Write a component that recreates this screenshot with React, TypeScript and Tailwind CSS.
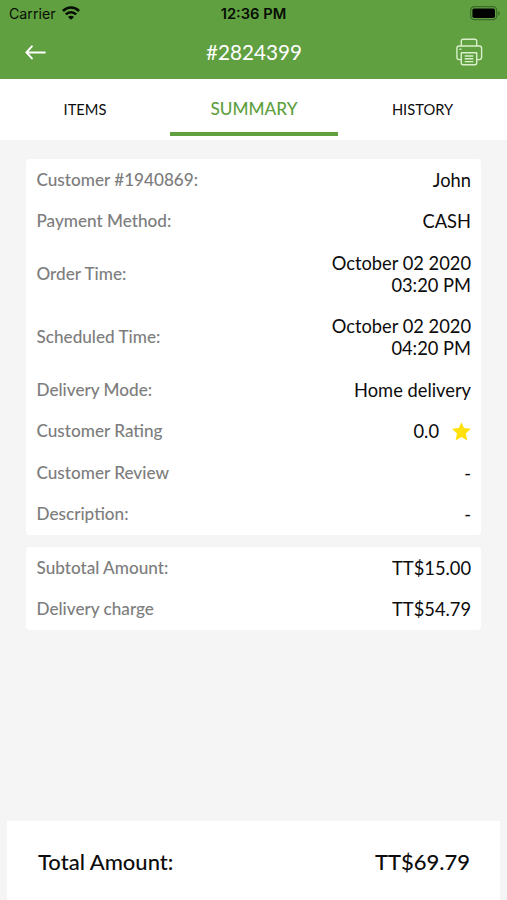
import React from 'react';

interface DetailItem {
  label: string;
  value: string;
  rating?: boolean;
}

const orderDetails: DetailItem[] = [
  { label: 'Customer #1940869:', value: 'John' },
  { label: 'Payment Method:', value: 'CASH' },
  { label: 'Order Time:', value: 'October 02 2020\n03:20 PM' },
  { label: 'Scheduled Time:', value: 'October 02 2020\n04:20 PM' },
  { label: 'Delivery Mode:', value: 'Home delivery' },
  { label: 'Customer Rating', value: '0.0', rating: true },
  { label: 'Customer Review', value: '-' },
  { label: 'Description:', value: '-' },
];

const amounts: DetailItem[] = [
  { label: 'Subtotal Amount:', value: 'TT$15.00' },
  { label: 'Delivery charge', value: 'TT$54.79' },
];

const WifiIcon: React.FC = () => (
  <svg width="18" height="14" viewBox="0 0 18 14" fill="none" stroke="#060d03" strokeWidth="2.6">
    <path d="M0.9 5 C5.4 0.4 12.6 0.4 17.1 5" />
    <path d="M3.8 8.4 C6.7 5.5 11.3 5.5 14.2 8.4" />
    <path d="M9 13.8 L6 10.9 C7.7 9.3 10.3 9.3 12 10.9 Z" fill="#060d03" stroke="none" />
  </svg>
);

const BatteryIcon: React.FC = () => (
  <svg width="31" height="15" viewBox="0 0 31 15">
    <rect x="0.7" y="0.7" width="26" height="13" rx="3.6" fill="none" stroke="#3d6b28" strokeWidth="1.2" />
    <rect x="2.4" y="2.4" width="22.6" height="9.6" rx="1.8" fill="#000" />
    <path d="M28.2 5 C30.3 5.8 30.3 8.8 28.2 9.6 Z" fill="#3d6b28" />
  </svg>
);

const BackIcon: React.FC = () => (
  <svg width="22" height="16" viewBox="0 0 22 16" fill="none" stroke="#fff" strokeWidth="2" strokeLinecap="round" strokeLinejoin="round">
    <path d="M19.8 8.4 H1.8 M6.9 2.4 L1.4 8.4 L6.9 14.4" />
  </svg>
);

const PrinterIcon: React.FC = () => (
  <svg width="28" height="28" viewBox="0 0 28 28" fill="none" stroke="#d9efc9" strokeWidth="1.4" strokeLinejoin="round">
    <path d="M6.3 8 V3 Q6.3 1.2 8.1 1.2 H19.9 Q21.7 1.2 21.7 3 V8" />
    <path d="M6.3 21.6 H4.2 Q1.9 21.6 1.9 19.3 V10.3 Q1.9 8 4.2 8 H24.3 Q26.6 8 26.6 10.3 V19.3 Q26.6 21.6 24.3 21.6 H21.7" />
    <path d="M6.3 14.7 H21.7 V25 Q21.7 26.8 19.9 26.8 H8.1 Q6.3 26.8 6.3 25 Z" />
    <path d="M9.7 18 H18.3 M9.7 20.8 H18.3 M9.7 23.6 H18.3" />
    <path d="M4.4 11.3 H6.4" />
  </svg>
);

const StarIcon: React.FC = () => (
  <svg width="20" height="19" viewBox="0 0 20 19" fill="#ffe00a">
    <path d="M10.4 0.2 L13 6.1 L19.8 6.8 L14.8 11.5 L16.3 18.4 L10.4 14.9 L4.5 18.4 L6 11.5 L1 6.8 L7.8 6.1 Z" />
  </svg>
);

const DetailCard: React.FC<{ items: DetailItem[] }> = ({ items }) => (
  <div className="bg-white rounded-[4px] px-[10px]">
    {items.map((item) => (
      <div key={item.label} className="flex items-center justify-between py-[9.75px]">
        <span className="pl-[0.5px] text-[17.15px] leading-[22px] font-medium text-[#7d7d7d]">{item.label}</span>
        <span className="flex items-center gap-[12px] text-[18.3px] leading-[22px] text-right whitespace-pre-line text-[#0c0c0c]">
          {item.value}
          {item.rating && <StarIcon />}
        </span>
      </div>
    ))}
  </div>
);

const App: React.FC = () => {
  return (
    <div className="w-[507px] h-[900px] flex flex-col overflow-hidden bg-[#f5f5f5] font-['Lato',sans-serif]">
      <header className="h-[79px] shrink-0 bg-[#60a041]">
        <div className="h-[27px] grid grid-cols-3 items-center pl-[9px] pr-[6px] font-['Inter',sans-serif] text-[#060d03]">
          <div className="flex items-center gap-[6px] text-[14.2px]">
            Carrier
            <WifiIcon />
          </div>
          <div className="-ml-[3px] pt-[2px] text-center text-[14.7px] font-semibold">12:36 PM</div>
          <div className="flex justify-end">
            <BatteryIcon />
          </div>
        </div>
        <div className="h-[50px] grid grid-cols-3 items-center pl-[25px] pr-[24px]">
          <BackIcon />
          <h1 className="pt-px text-center text-[20.7px] text-white">#2824399</h1>
          <div className="flex justify-end">
            <PrinterIcon />
          </div>
        </div>
      </header>

      <nav className="h-[61px] shrink-0 grid grid-cols-3 bg-white text-center text-[14.7px] text-[#0c0c0c]">
        <div className="pl-px leading-[60px]">ITEMS</div>
        <div className="h-[57px] ml-px border-b-4 border-[#60a041] leading-[60px] text-[17.2px] font-medium text-[#60a041]">SUMMARY</div>
        <div className="leading-[60px]">HISTORY</div>
      </nav>

      <main className="flex-1 flex flex-col gap-[12px] px-[26px] pt-[19px]">
        <DetailCard items={orderDetails} />
        <DetailCard items={amounts} />
      </main>

      <footer className="h-[79px] shrink-0 mx-[7px] pt-px pl-[31px] pr-[30px] flex items-center justify-between bg-white text-[22px] font-medium text-[#0c0c0c]">
        <span>Total Amount:</span>
        <span>TT$69.79</span>
      </footer>
    </div>
  );
};

export default App;
